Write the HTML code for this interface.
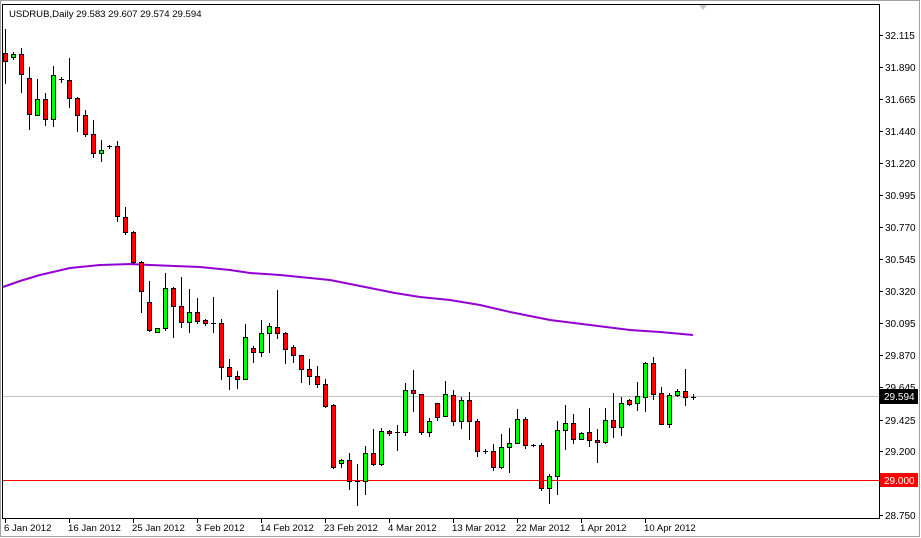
<!DOCTYPE html>
<html><head><meta charset="utf-8"><style>
html,body{margin:0;padding:0;background:#fff;width:921px;height:538px;overflow:hidden}
svg{display:block}
text{font-family:"Liberation Sans",sans-serif;font-size:10px;fill:#000}
.sm{font-size:9.6px}
</style></head><body>
<svg id="s" width="921" height="538" xmlns="http://www.w3.org/2000/svg">
<rect x="0" y="0" width="921" height="538" fill="#fff"/>
<rect x="0.5" y="0.5" width="919" height="536" fill="none" stroke="#a0a0a0"/>
<line x1="2.5" y1="4" x2="2.5" y2="519" stroke="#000"/>
<line x1="2" y1="4.5" x2="880" y2="4.5" stroke="#000"/>
<line x1="879.5" y1="4" x2="879.5" y2="519" stroke="#000"/>
<line x1="2" y1="518.5" x2="880" y2="518.5" stroke="#000"/>
<polygon points="699,5 707,5 703,10" fill="#c8c8c8"/>
<line x1="3" y1="396.5" x2="879" y2="396.5" stroke="#c0c0c0"/>
<line x1="3" y1="480.5" x2="879" y2="480.5" stroke="#ff0000"/>
<polyline fill="none" stroke="#9400d3" stroke-width="2" points="3,287 20,281 40,275 70,268 100,265 130,264 150,265 200,267 230,270 250,273 280,275 300,277 330,280 360,286 395,293 420,297 450,300 480,305 510,312 550,320 590,325 630,330 660,332 693,335"/>
<g id="c"></g>
<text class="sm" x="9" y="17">USDRUB,Daily  29.583 29.607 29.574 29.594</text>
<g id="pa"></g>
<rect x="880" y="389" width="38" height="15" fill="#000"/>
<text x="884" y="400" style="fill:#fff">29.594</text>
<rect x="880" y="473" width="38" height="14" fill="#ff0000"/>
<text x="884" y="484" style="fill:#fff">29.000</text>
<g id="ta"></g>
<g class="sm">
<text class="sm" x="4" y="531">6 Jan 2012</text>
<text class="sm" x="68" y="531">16 Jan 2012</text>
<text class="sm" x="132" y="531">25 Jan 2012</text>
<text class="sm" x="196" y="531">3 Feb 2012</text>
<text class="sm" x="260" y="531">14 Feb 2012</text>
<text class="sm" x="324" y="531">23 Feb 2012</text>
<text class="sm" x="388" y="531">4 Mar 2012</text>
<text class="sm" x="452" y="531">13 Mar 2012</text>
<text class="sm" x="516" y="531">22 Mar 2012</text>
<text class="sm" x="580" y="531">1 Apr 2012</text>
<text class="sm" x="644" y="531">10 Apr 2012</text>
</g>
<text x="885" y="39">32.115</text>
<text x="885" y="71">31.890</text>
<text x="885" y="103">31.665</text>
<text x="885" y="135">31.440</text>
<text x="885" y="167">31.220</text>
<text x="885" y="199">30.995</text>
<text x="885" y="231">30.770</text>
<text x="885" y="263">30.545</text>
<text x="885" y="295">30.320</text>
<text x="885" y="327">30.095</text>
<text x="885" y="359">29.870</text>
<text x="885" y="391">29.645</text>
<text x="885" y="424">29.425</text>
<text x="885" y="455">29.200</text>
<text x="885" y="519">28.750</text>
</svg>
<script>
var D=[
[53,61,29,83],[57,54,52,59],[54,74,48,92],[78,114,67,129],[115,99,79,115],[99,119,93,125],[119,75,66,126],[79,79,77,82],
[80,98,58,107],[98,115,97,131],[115,134,110,136],[134,153,120,157],[153,150,140,161],[146,146,145,148],[146,216,141,221],[217,232,207,234],
[232,262,231,263],[262,291,261,312],[302,330,281,331],[332,328,328,332],[328,288,273,330],[288,306,287,337],[306,322,277,327],[322,312,289,332],
[312,321,298,323],[320,323,319,325],[323,323,297,332],[323,367,319,379],[367,376,359,389],[376,379,371,388],[379,337,324,379],[348,352,346,362],
[352,333,320,356],[333,326,323,352],[327,333,290,338],[333,349,332,363],[347,355,345,362],[355,369,355,382],[369,376,359,384],[376,384,366,387],
[384,406,379,407],[405,467,404,468],[463,460,459,467],[460,481,453,489],[481,481,464,505],[481,453,446,494],[453,464,429,465],[464,431,428,465],
[431,433,430,435],[432,432,425,450],[432,390,383,435],[390,393,370,411],[394,432,394,434],[432,421,418,436],[403,417,403,420],[416,394,381,416],
[395,421,390,425],[421,400,397,428],[400,421,392,439],[421,451,419,456],[451,451,449,453],[451,467,444,470],[467,447,434,468],[447,443,428,472],
[443,419,409,443],[419,445,417,448],[445,445,444,446],[445,488,443,490],[488,476,474,503],[476,430,421,494],[430,423,405,449],[423,439,414,443],
[439,433,432,439],[432,440,408,446],[440,442,429,462],[442,420,408,443],[420,427,393,437],[427,403,397,435],[400,404,399,405],[403,396,382,410],
[397,363,362,411],[363,394,357,399],[393,424,387,424],[424,395,393,427],[395,391,389,396],[391,397,369,405],[397,397,394,399]];
var g=document.getElementById('c'),h='';
D.forEach(function(d,i){var x=5+8*i,o=d[0],c=d[1],hi=d[2],lo=d[3];
h+='<line x1="'+(x+.5)+'" y1="'+hi+'" x2="'+(x+.5)+'" y2="'+(lo+1)+'" stroke="#000"/>';
if(o==c){h+='<line x1="'+(x-2)+'" y1="'+(o+.5)+'" x2="'+(x+3)+'" y2="'+(o+.5)+'" stroke="#000"/>';}
else{var t=Math.min(o,c),b=Math.max(o,c);h+='<rect x="'+(x-1.5)+'" y="'+(t+.5)+'" width="4" height="'+(b-t)+'" fill="'+(c<o?'#00ff00':'#ff0000')+'" stroke="#000"/>';}
});
g.innerHTML=h;
var p='';[35,67,99,131,163,195,227,259,291,323,355,387,420,451,484,515].forEach(function(y){p+='<line x1="879" y1="'+(y+.5)+'" x2="883" y2="'+(y+.5)+'" stroke="#000"/>';});
document.getElementById('pa').innerHTML=p;
var t='';[5,69,133,197,261,325,389,453,517,581,645].forEach(function(x){t+='<line x1="'+(x+.5)+'" y1="518" x2="'+(x+.5)+'" y2="523" stroke="#000"/>';});
document.getElementById('ta').innerHTML=t;
</script>
</body></html>
